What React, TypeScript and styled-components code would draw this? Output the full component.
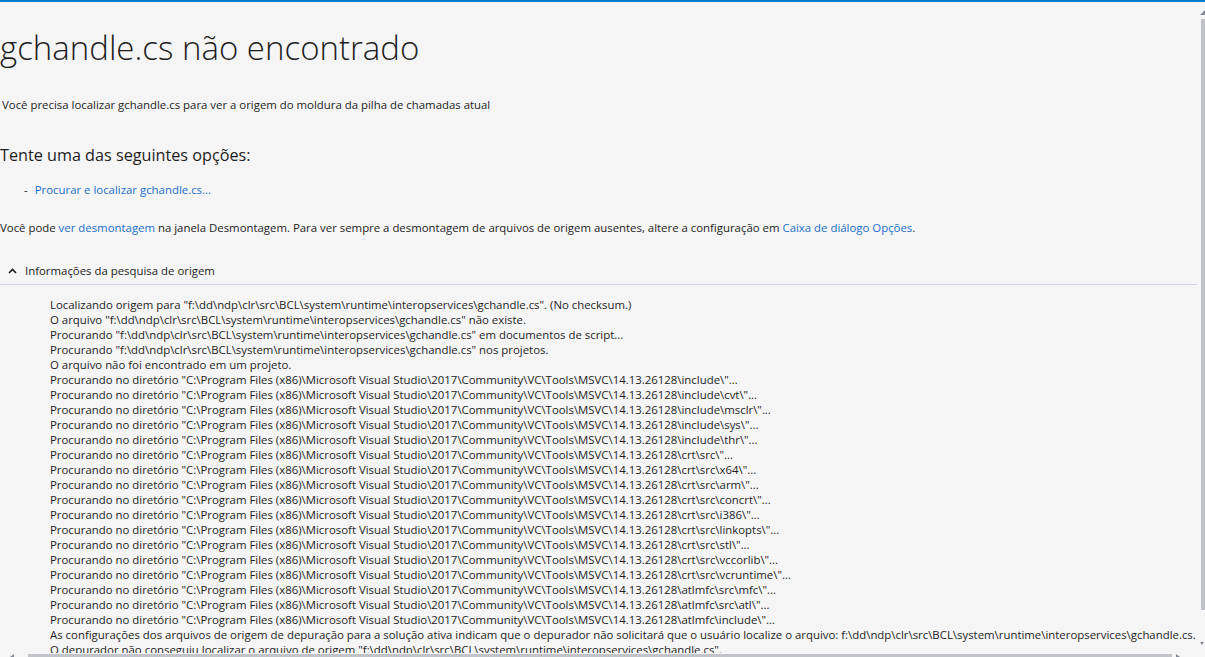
import React, { ReactElement } from "react";
import styled, { createGlobalStyle } from "styled-components";

const GlobalStyle = createGlobalStyle`
  html, body {
    margin: 0;
    padding: 0;
    background: #f5f5f5;
    overflow: hidden;
  }
  body {
    font-family: "Open Sans", "Noto Sans", sans-serif;
    color: #1e1e1e;
  }
`;

const Frame = styled.div`
  position: relative;
  width: 1205px;
  height: 657px;
  box-sizing: border-box;
  border-top: 2px solid #007acc;
  background: #f5f5f5;
  overflow: hidden;
`;

const Viewport = styled.div`
  width: 1197px;
  height: 651px;
  overflow: hidden;
`;

const Content = styled.div`
  display: flex;
  flex-direction: column;
  font-size: 11.4px;
  white-space: nowrap;
`;

const Title = styled.h1`
  margin: 26px 0 0 0;
  font-size: 33px;
  font-weight: 300;
  line-height: 40px;
`;

const Lead = styled.p`
  margin: 29px 0 0 2px;
  line-height: 16px;
`;

const Subtitle = styled.h2`
  margin: 30px 0 0 0;
  font-size: 16.2px;
  font-weight: 400;
  line-height: 24px;
`;

const OptionList = styled.ul`
  list-style: none;
  margin: 15px 0 0 0;
  padding: 0 0 0 24px;
`;

const OptionItem = styled.li`
  display: flex;
  gap: 7px;
  line-height: 16px;
`;

const Link = styled.a`
  color: #1a6fc9;
  text-decoration: none;
  cursor: pointer;
`;

const Note = styled.p`
  margin: 22px 0 0 0;
  line-height: 16px;
`;

const Section = styled.section`
  margin-top: 27px;
  display: flex;
  flex-direction: column;
`;

const SectionHeader = styled.button`
  display: flex;
  align-items: center;
  gap: 8px;
  padding: 0 0 5px 8px;
  border: 0;
  border-bottom: 1px solid #cfd1e4;
  background: none;
  font: inherit;
  color: inherit;
  line-height: 16px;
  text-align: left;
`;

const LogList = styled.div`
  display: flex;
  flex-direction: column;
  padding: 12px 0 0 50px;
  line-height: 15px;
`;

const ScrollTrackV = styled.div`
  position: absolute;
  top: 0;
  right: 0;
  width: 5px;
  height: 651px;
`;

const ScrollTrackH = styled.div`
  position: absolute;
  left: 0;
  bottom: 0;
  width: 1198px;
  height: 4px;
`;

const Thumb = styled.div<{ $vertical?: boolean }>`
  position: absolute;
  background: #c2c3c9;
  ${(p) =>
    p.$vertical
      ? "top: 17px; right: 0; width: 4px; height: 591px;"
      : "left: 28px; bottom: 0; width: 1144px; height: 3px;"}
`;

const Arrow = styled.svg`
  position: absolute;
  fill: #868999;
`;

const base =
  'Procurando no diretório "C:\\Program Files (x86)\\Microsoft Visual Studio\\2017\\Community\\VC\\Tools\\MSVC\\14.13.26128\\';

const dirs = [
  "include",
  "include\\cvt",
  "include\\msclr",
  "include\\sys",
  "include\\thr",
  "crt\\src",
  "crt\\src\\x64",
  "crt\\src\\arm",
  "crt\\src\\concrt",
  "crt\\src\\i386",
  "crt\\src\\linkopts",
  "crt\\src\\stl",
  "crt\\src\\vccorlib",
  "crt\\src\\vcruntime",
  "atlmfc\\src\\mfc",
  "atlmfc\\src\\atl",
  "atlmfc\\include",
];

const file = "f:\\dd\\ndp\\clr\\src\\BCL\\system\\runtime\\interopservices\\gchandle.cs";

const logLines = [
  `Localizando origem para "${file}". (No checksum.)`,
  `O arquivo "${file}" não existe.`,
  `Procurando "${file}" em documentos de script...`,
  `Procurando "${file}" nos projetos.`,
  "O arquivo não foi encontrado em um projeto.",
  ...dirs.map((d) => `${base}${d}\\"...`),
  `As configurações dos arquivos de origem de depuração para a solução ativa indicam que o depurador não solicitará que o usuário localize o arquivo: ${file}.`,
  `O depurador não conseguiu localizar o arquivo de origem "${file}".`,
];

export default function App(): ReactElement {
  return (
    <>
      <GlobalStyle />
      <Frame>
        <Viewport>
          <Content>
            <Title>gchandle.cs não encontrado</Title>
            <Lead>
              Você precisa localizar gchandle.cs para ver a origem do moldura da pilha de chamadas
              atual
            </Lead>
            <Subtitle>Tente uma das seguintes opções:</Subtitle>
            <OptionList>
              <OptionItem>
                <span>-</span>
                <Link>Procurar e localizar gchandle.cs...</Link>
              </OptionItem>
            </OptionList>
            <Note>
              Você pode <Link>ver desmontagem</Link> na janela Desmontagem. Para ver sempre a
              desmontagem de arquivos de origem ausentes, altere a configuração em{" "}
              <Link>Caixa de diálogo Opções</Link>.
            </Note>
            <Section>
              <SectionHeader>
                <svg width="9" height="6" viewBox="0 0 9 6">
                  <path d="M1 5 L4.5 1.5 L8 5" fill="none" stroke="#1e1e1e" strokeWidth="1.6" />
                </svg>
                Informações da pesquisa de origem
              </SectionHeader>
              <LogList>
                {logLines.map((line, i) => (
                  <span key={i}>{line}</span>
                ))}
              </LogList>
            </Section>
          </Content>
        </Viewport>
        <ScrollTrackV>
          <Arrow width="5" height="5" viewBox="0 0 5 5" style={{ top: 8, right: 0 }}>
            <path d="M5 0 L5 5 L0 5 Z" />
          </Arrow>
          <Thumb $vertical />
          <Arrow width="4" height="4" viewBox="0 0 4 4" style={{ top: 640, right: 1 }}>
            <path d="M0 0 L4 0 L2 3 Z" />
          </Arrow>
        </ScrollTrackV>
        <ScrollTrackH>
          <Arrow width="4" height="3" viewBox="0 0 4 3" style={{ left: 10, bottom: 0 }}>
            <path d="M0 3 L4 3 L4 0 Z" />
          </Arrow>
          <Thumb />
          <Arrow width="4" height="3" viewBox="0 0 4 3" style={{ left: 1176, bottom: 0 }}>
            <path d="M0 0 L0 3 L4 3 Z" />
          </Arrow>
        </ScrollTrackH>
      </Frame>
    </>
  );
}
